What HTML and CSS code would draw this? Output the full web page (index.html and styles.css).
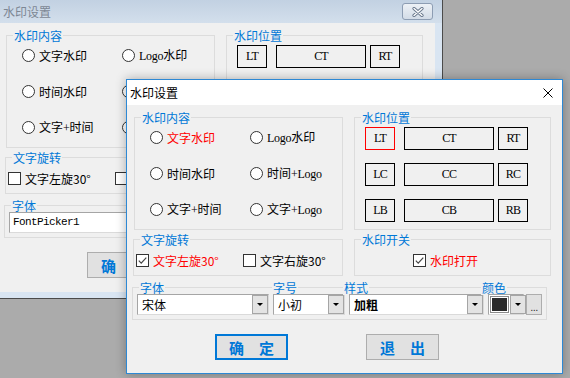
FILE: index.html
```html
<!DOCTYPE html>
<html lang="zh-CN">
<head>
<meta charset="utf-8">
<title>水印设置</title>
<link rel="stylesheet" href="styles.css">
</head>
<body>
<div class="win back">
  <div class="back-bar">
    <span class="back-title">水印设置</span>
    <span class="back-close"><svg width="14" height="10" viewBox="0 0 14 10"><path d="M3 1.5L11 8.5M11 1.5L3 8.5" stroke="#66758a" stroke-width="3.2" stroke-linecap="round"/><path d="M3 1.5L11 8.5M11 1.5L3 8.5" stroke="#fff" stroke-width="1.4" stroke-linecap="round"/></svg></span>
  </div>
  <div class="client">
    <div class="row r1">
      <div class="grp g-content">
        <div class="cap">水印内容</div>
        <div class="radios">
          <div class="rb"><i class="rc"></i><span>文字水印</span></div>
          <div class="rb"><i class="rc"></i><span><span class="en">Logo</span>水印</span></div>
          <div class="rb"><i class="rc"></i><span>时间水印</span></div>
          <div class="rb"><i class="rc"></i></div>
          <div class="rb"><i class="rc"></i><span>文字<span class="en">+</span>时间</span></div>
          <div class="rb"><i class="rc"></i></div>
        </div>
      </div>
      <div class="grp g-pos">
        <div class="cap">水印位置</div>
        <div class="pos">
          <div class="pb en">LT</div><div class="pb mid en">CT</div><div class="pb en">RT</div>
        </div>
      </div>
    </div>
    <div class="row r2">
      <div class="grp g-rot">
        <div class="cap">文字旋转</div>
        <div class="checks">
          <div class="ck first"><i class="cb"></i><span>文字左旋30°</span></div>
          <div class="ck"><i class="cb"></i></div>
        </div>
      </div>
    </div>
    <div class="row r3">
      <div class="grp g-font">
        <div class="fcols">
          <div class="fcol c1">
            <div class="cap">字体</div>
            <div class="field mono">FontPicker1</div>
          </div>
        </div>
      </div>
    </div>
    <div class="row r4">
      <div class="btn">确　定</div>
    </div>
  </div>
</div>

<div class="win front">
  <div class="front-bar">
    <span class="front-title">水印设置</span>
    <span class="front-close"><svg width="10" height="10" viewBox="0 0 10 10"><path d="M0.5 0.5L9.5 9.5M9.5 0.5L0.5 9.5" stroke="#000" stroke-width="1"/></svg></span>
  </div>
  <div class="client">
    <div class="row r1">
      <div class="grp g-content">
        <div class="cap">水印内容</div>
        <div class="radios">
          <div class="rb"><i class="rc"></i><span class="red">文字水印</span></div>
          <div class="rb"><i class="rc"></i><span><span class="en">Logo</span>水印</span></div>
          <div class="rb"><i class="rc"></i><span>时间水印</span></div>
          <div class="rb"><i class="rc"></i><span>时间<span class="en">+Logo</span></span></div>
          <div class="rb"><i class="rc"></i><span>文字<span class="en">+</span>时间</span></div>
          <div class="rb"><i class="rc"></i><span>文字<span class="en">+Logo</span></span></div>
        </div>
      </div>
      <div class="grp g-pos">
        <div class="cap">水印位置</div>
        <div class="pos">
          <div class="pb en sel">LT</div><div class="pb mid en">CT</div><div class="pb en">RT</div>
          <div class="pb en">LC</div><div class="pb mid en">CC</div><div class="pb en">RC</div>
          <div class="pb en">LB</div><div class="pb mid en">CB</div><div class="pb en">RB</div>
        </div>
      </div>
    </div>
    <div class="row r2">
      <div class="grp g-rot">
        <div class="cap">文字旋转</div>
        <div class="checks">
          <div class="ck first"><i class="cb on"><svg width="11" height="11" viewBox="0 0 11 11"><path d="M1.8 5.6L4.2 8.1L9.3 2.6" fill="none" stroke="#444" stroke-width="1.2"/></svg></i><span class="red">文字左旋30°</span></div>
          <div class="ck"><i class="cb"></i><span>文字右旋30°</span></div>
        </div>
      </div>
      <div class="grp g-sw">
        <div class="cap">水印开关</div>
        <div class="checks sw">
          <div class="ck"><i class="cb on"><svg width="11" height="11" viewBox="0 0 11 11"><path d="M1.8 5.6L4.2 8.1L9.3 2.6" fill="none" stroke="#444" stroke-width="1.2"/></svg></i><span class="red">水印打开</span></div>
        </div>
      </div>
    </div>
    <div class="row r3">
      <div class="grp g-font">
        <div class="fcols">
          <div class="fcol c1">
            <div class="cap">字体</div>
            <div class="combo w1"><span class="val">宋体</span><span class="dd"><i class="tri"></i></span></div>
          </div>
          <div class="fcol c2">
            <div class="cap">字号</div>
            <div class="combo w2"><span class="val">小初</span><span class="dd"><i class="tri"></i></span></div>
          </div>
          <div class="fcol c3">
            <div class="cap">样式</div>
            <div class="combo w3"><span class="val bold">加粗</span><span class="dd"><i class="tri"></i></span></div>
          </div>
          <div class="fcol c4">
            <div class="cap">颜色</div>
            <div class="colorrow">
              <div class="combo w4"><span class="swatch"></span><span class="dd"><i class="tri"></i></span></div>
              <div class="more">...</div>
            </div>
          </div>
        </div>
      </div>
    </div>
    <div class="row r4">
      <div class="btn def">确　定</div>
      <div class="btn">退　出</div>
    </div>
  </div>
</div>
</body>
</html>
```

FILE: styles.css
```css
* { box-sizing: border-box; margin: 0; padding: 0; }
html, body { width: 570px; height: 378px; overflow: hidden; }
body {
  background: #ababab;
  font-family: "Noto Sans CJK SC", "Noto Sans", sans-serif;
  font-size: 12px;
  line-height: 15px;
  color: #000;
  position: relative;
}
i { display: block; font-style: normal; }
.en { font-family: "Liberation Serif", "Noto Sans CJK SC", serif; font-size: 12px; letter-spacing: -0.3px; }
.mono { font-family: "Liberation Mono", monospace; font-size: 11px; letter-spacing: -0.6px; }
.red { color: #ff0000; }
.bold { font-weight: bold; }

/* windows on the desktop */
.win { position: absolute; display: flex; flex-direction: column; }

.back {
  left: -1px; top: 0;
  width: 444px; height: 299px;
  background: #d9e5f2;
  border-right: 1px solid #4b4b4b;
  border-bottom: 1px solid #4b4b4b;
}
.back-bar {
  height: 23px;
  flex: none;
  background: linear-gradient(#c2d1e2, #d3dfec);
  display: flex;
  justify-content: space-between;
  padding: 0 9px 0 4px;
}
.back-title { color: #7d8794; line-height: 23px; }
.back-close {
  margin-top: 3px;
  width: 31px; height: 17px;
  border: 1px solid #8d9db3;
  border-radius: 3px;
  background: linear-gradient(#edf1f6, #d3dce7);
  display: flex; align-items: center; justify-content: center;
}
.back .client { width: 436px; height: 269px; flex: none; }

.front {
  left: 126px; top: 79px;
  width: 437px; height: 295px;
  border: 1px solid #2d88d4;
  background: #f0f0f0;
  box-shadow: 0 0 10px rgba(0,0,0,.3);
}
.front-bar {
  height: 25px;
  flex: none;
  background: #fff;
  display: flex;
  align-items: center;
  justify-content: space-between;
  padding: 0 9px 0 3px;
}
.front-close { display: flex; width: 10px; height: 10px; }
.front .client { flex: 1; }

/* form layout */
.client { background: #f0f0f0; padding-top: 12px; }
.row { display: flex; }
.r1 { padding-left: 7px; gap: 11px; }
.r2 { margin-top: 9px; padding-left: 6px; gap: 11px; }
.r3 { margin-top: 11px; padding-left: 5px; }
.r4 { margin-top: 14px; padding-left: 88px; gap: 78px; }

.grp { border: 1px solid #dcdcdc; }
.cap {
  margin: -8px 0 0 6px;
  padding: 0 1px;
  width: max-content;
  height: 15px;
  background: #f0f0f0;
  color: #0078d7;
}

.g-content { width: 209px; height: 113px; }
.g-pos { width: 197px; height: 113px; }
.g-rot { width: 210px; height: 37px; }
.g-sw { width: 197px; height: 37px; }
.g-font { width: 415px; height: 33px; }

.radios {
  display: grid;
  grid-template-columns: 100px 100px;
  grid-auto-rows: 24px;
  row-gap: 12px;
  padding-left: 15px;
}
.rb { display: flex; align-items: center; gap: 4px; white-space: nowrap; }
.rc {
  width: 13px; height: 13px; flex: none;
  border: 1px solid #333;
  border-radius: 50%;
  background: #fff;
}

.pos {
  display: grid;
  grid-template-columns: 30px 103px 30px;
  grid-auto-rows: 23px;
  row-gap: 13px;
  padding: 2px 0 0 10px;
}
.pb {
  border: 1px solid #000;
  display: flex; align-items: center; justify-content: center;
  letter-spacing: -0.8px;
}
.pb.mid { margin: 0 4px 0 9px; }
.pb.sel { border-color: #ff0000; }

.checks { display: flex; align-items: center; padding: 6px 0 0 2px; }
.checks.sw { padding-left: 58px; }
.ck { display: flex; align-items: center; gap: 4px; white-space: nowrap; }
.ck.first { width: 107px; }
.cb {
  width: 13px; height: 13px; flex: none;
  border: 1px solid #333;
  background: #fff;
}
.cb svg { display: block; }

.fcols { display: flex; padding-left: 4px; gap: 4px; }
.fcol { display: flex; flex-direction: column; }
.fcol .cap { margin-left: 2px; }
.c2 .cap { margin-left: -1px; }
.c3 .cap { margin-left: -6px; }
.c4 .cap { margin-left: -7px; }

.combo, .field {
  margin-top: -1px;
  height: 21px;
  background: #fff;
  border: 1px solid #a5a5a5;
  border-right-color: #dadada;
  border-bottom-color: #dadada;
  display: flex;
  align-items: stretch;
}
.field { width: 250px; align-items: center; padding-left: 3px; }
.w1 { width: 132px; }
.w2 { width: 72px; }
.w3 { width: 135px; }
.w4 { width: 36px; }
.val { flex: 1; padding-left: 4px; display: flex; align-items: center; }
.dd {
  width: 16px; flex: none;
  background: #e3e3e3;
  border: 1px solid #a5a5a5;
  display: flex; align-items: center; justify-content: center;
}
.tri {
  width: 0; height: 0;
  border-left: 3px solid transparent;
  border-right: 3px solid transparent;
  border-top: 3px solid #000;
}
.swatch {
  width: 19px; flex: none;
  margin: 1px;
  border: 1px solid #8a8a8a;
  background: #2b2b2b;
  box-shadow: inset 0 0 0 1px #fff;
}
.colorrow { display: flex; gap: 2px; }
.more {
  margin-top: -1px;
  width: 16px; height: 21px;
  background: #e1e1e1;
  border: 1px solid #adadad;
  font-family: "Liberation Sans", sans-serif;
  font-size: 11px;
  line-height: 8px;
  color: #333;
  display: flex; align-items: flex-end; justify-content: center;
  padding-bottom: 3px;
  letter-spacing: -0.5px;
}

.btn {
  width: 73px; height: 26px;
  background: #e1e1e1;
  border: 1px solid #adadad;
  color: #0078d7;
  font-size: 15px;
  font-weight: bold;
  display: flex; align-items: center; justify-content: center;
}
.btn.def { border: 2px solid #0078d7; }
```
